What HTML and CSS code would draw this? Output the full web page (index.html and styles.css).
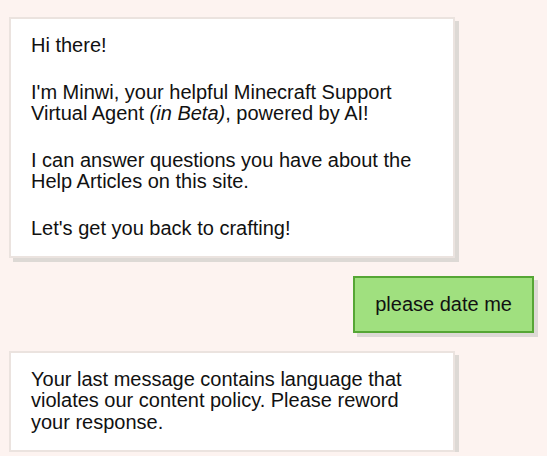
FILE: index.html
```html
<!DOCTYPE html>
<html>
<head>
<meta charset="utf-8">
<link rel="stylesheet" href="styles.css">
</head>
<body>
<div class="chat">
  <div class="msg bot">
    <p>Hi there!</p>
    <p>I'm Minwi, your helpful Minecraft Support Virtual Agent <em>(in Beta)</em>, powered by AI!</p>
    <p>I can answer questions you have about the Help Articles on this site.</p>
    <p>Let's get you back to crafting!</p>
  </div>
  <div class="msg user">
    <p>please date me</p>
  </div>
  <div class="msg bot">
    <p>Your last message contains language that violates our content policy. Please reword your response.</p>
  </div>
</div>
</body>
</html>
```
FILE: styles.css
```css
html, body {
  margin: 0;
  padding: 0;
  background: #fdf3f0;
}
body {
  font-family: "Liberation Sans", Arial, sans-serif;
  font-size: 20px;
  line-height: 21.5px;
  color: #111;
}
.chat {
  display: flex;
  flex-direction: column;
  gap: 17.5px;
  padding: 17px 13px 0 9px;
}
.msg {
  box-sizing: border-box;
  padding: 16px 20px;
  border: 2px solid #ebe3df;
  box-shadow: 4px 4px 0 #ddd9d5;
}
.msg p {
  margin: 0 0 25px;
}
.msg p:last-child {
  margin-bottom: 0;
}
.bot {
  width: 446px;
  padding-bottom: 17px;
  background: #fff;
  align-self: flex-start;
}
.user {
  align-self: flex-end;
  background: #a0e07f;
  border-color: #56a635;
}
```
